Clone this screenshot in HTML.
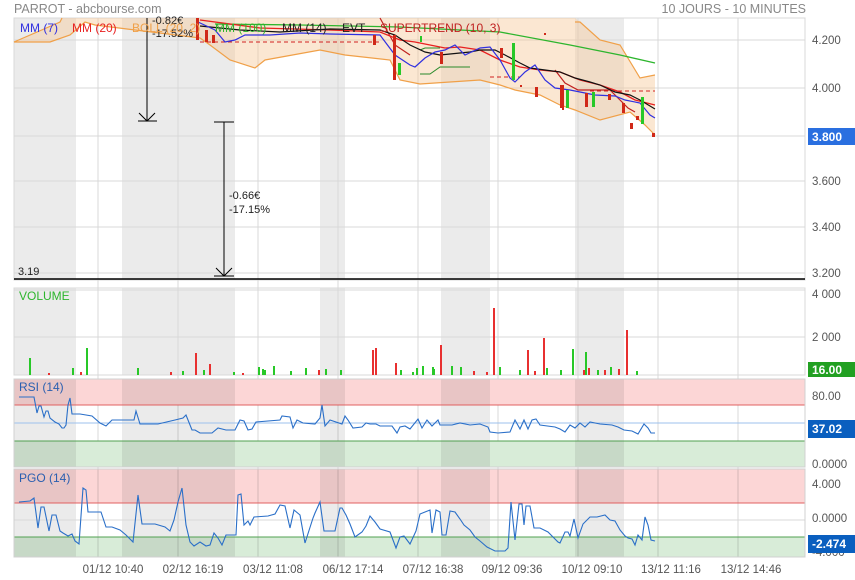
<!DOCTYPE html>
<html><head><meta charset="utf-8"><style>
html,body{margin:0;padding:0;background:#fff;width:855px;height:580px;overflow:hidden;font-family:"Liberation Sans",sans-serif}
svg text{font-family:"Liberation Sans",sans-serif}
</style></head><body>
<svg width="855" height="580" viewBox="0 0 855 580" xmlns="http://www.w3.org/2000/svg">
<text x="14" y="13" font-size="12.5" fill="#888">PARROT - abcbourse.com</text>
<text x="806" y="13" font-size="12.5" fill="#888" text-anchor="end">10 JOURS - 10 MINUTES</text>

<!-- grey bands -->
<g fill="#ebebeb">
<rect x="14" y="18" width="62" height="262"/><rect x="122" y="18" width="113" height="262"/><rect x="320" y="18" width="25" height="262"/><rect x="441" y="18" width="49" height="262"/><rect x="575" y="18" width="49" height="262"/>
<rect x="14" y="288" width="62" height="87"/><rect x="122" y="288" width="113" height="87"/><rect x="320" y="288" width="25" height="87"/><rect x="441" y="288" width="49" height="87"/><rect x="575" y="288" width="49" height="87"/>
</g>
<!-- grid -->
<g stroke="#d8d8d8" stroke-width="1">
<line x1="98" y1="18" x2="98" y2="557"/><line x1="178" y1="18" x2="178" y2="557"/><line x1="258" y1="18" x2="258" y2="557"/><line x1="338" y1="18" x2="338" y2="557"/><line x1="418" y1="18" x2="418" y2="557"/><line x1="498" y1="18" x2="498" y2="557"/><line x1="578" y1="18" x2="578" y2="557"/><line x1="658" y1="18" x2="658" y2="557"/><line x1="738" y1="18" x2="738" y2="557"/>
<line x1="14" y1="40" x2="805" y2="40"/><line x1="14" y1="88" x2="805" y2="88"/><line x1="14" y1="136" x2="805" y2="136"/><line x1="14" y1="181" x2="805" y2="181"/><line x1="14" y1="227" x2="805" y2="227"/><line x1="14" y1="273" x2="805" y2="273"/>
<line x1="14" y1="290" x2="805" y2="290"/><line x1="14" y1="337" x2="805" y2="337"/>
<rect x="14" y="18" width="791" height="262" fill="none"/>
<rect x="14" y="288" width="791" height="87" fill="none"/>
</g>
<!-- bollinger band -->
<path d="M14,42 L60,22 L62,18 L575,18 L580,22 L600,40 L620,45 L640,78 L655,75 L655,135 L645,125 L630,112 L600,120 L575,110 L560,105 L540,95 L515,90 L500,85 L480,80 L420,84 L400,80 L390,60 L345,55 L320,50 L265,60 L255,68 L230,60 L210,45 L200,38 L95,25 L85,22 L70,35 L50,42 Z" fill="#f7c99b" fill-opacity="0.45" stroke="none"/>
<path d="M14,42 L60,22 L62,18 M575,22 L580,22 L600,40 L620,45 L640,78 L655,75" fill="none" stroke="#f0a048" stroke-width="1.2"/>
<path d="M14,42 L50,42 L70,35 L85,22 L95,25 L200,38 L210,45 L230,60 L255,68 L265,60 L320,50 L345,55 L390,60 L400,80 L420,84 L480,80 L500,85 L515,90 L540,95 L560,105 L575,110 L600,120 L630,112 L645,125 L655,135" fill="none" stroke="#f0a048" stroke-width="1.2"/>
<!-- MM100 -->
<polyline points="215,24 300,25 400,27 500,32 570,45 620,55 655,63" fill="none" stroke="#2db52d" stroke-width="1.3"/>
<!-- supertrend -->
<polyline points="380,18 395,45 410,55" fill="none" stroke="#c02020" stroke-width="1.2"/>
<polyline points="555,70 565,83 578,90 610,90 620,100 628,108 635,112" fill="none" stroke="#c02020" stroke-width="1.2"/>
<line x1="200" y1="42" x2="380" y2="42" stroke="#d02020" stroke-dasharray="4,3"/>
<line x1="490" y1="77" x2="520" y2="77" stroke="#d02020" stroke-dasharray="4,3"/>
<line x1="590" y1="91" x2="655" y2="91" stroke="#d02020" stroke-dasharray="4,3"/>
<polyline points="420,74 430,74 440,67 470,67" fill="none" stroke="#2a8a2a" stroke-width="1"/>
<polyline points="420,50 425,48 440,48" fill="none" stroke="#2a8a2a" stroke-width="1"/>
<!-- MM20 red -->
<polyline points="200,20 260,28 330,30 380,32 400,40 415,42 430,45 445,48 460,47 480,50 500,60 520,67 540,70 560,72 580,80 600,85 620,92 635,100 655,105" fill="none" stroke="#e82020" stroke-width="1.3"/>
<!-- MM14 black -->
<polyline points="200,26 240,30 280,32 330,29 380,30 395,35 410,45 425,52 440,55 470,52 480,50 495,50 505,55 520,63 530,68 545,70 560,72 575,78 590,82 600,85 615,92 630,95 640,100 655,109" fill="none" stroke="#111" stroke-width="1.2"/>
<!-- MM7 blue -->
<polyline points="198,22 215,30 225,42 235,40 245,35 270,35 300,33 330,34 380,35 395,55 410,65 415,67 425,58 435,52 445,50 455,45 465,55 480,48 490,47 500,60 510,78 515,82 525,72 535,65 545,80 555,88 570,90 580,92 595,95 615,96 625,100 640,103 650,115 655,118" fill="none" stroke="#3030e0" stroke-width="1.2"/>
<!-- candles -->
<g fill="#d02818">
<rect x="196" y="18" width="3" height="22"/><rect x="205" y="30" width="3" height="12"/><rect x="212" y="35" width="3" height="8"/><rect x="373" y="35" width="3" height="10"/><rect x="393" y="35" width="3" height="45"/><rect x="440" y="52" width="3" height="12"/><rect x="500" y="48" width="3" height="10"/><rect x="535" y="87" width="3" height="10"/><rect x="560" y="85" width="3" height="23"/><rect x="562" y="85" width="2" height="25"/><rect x="585" y="93" width="3" height="14"/><rect x="608" y="94" width="3" height="6"/><rect x="630" y="123" width="3" height="6"/><rect x="622" y="103" width="3" height="10"/><rect x="636" y="116" width="3" height="4"/><rect x="652" y="133" width="3" height="4"/><rect x="544" y="33" width="2" height="2"/><rect x="520" y="85" width="2" height="2"/>
</g>
<g fill="#28c828">
<rect x="398" y="63" width="3" height="12"/><rect x="420" y="36" width="2" height="6"/><rect x="512" y="43" width="3" height="37"/><rect x="566" y="90" width="3" height="18"/><rect x="592" y="92" width="3" height="15"/><rect x="641" y="97" width="3" height="27"/>
</g>
<!-- annotations -->
<g stroke="#000" stroke-width="1" fill="none">
<line x1="147" y1="18" x2="147" y2="121"/><polyline points="139,113 147,121 155,113"/><line x1="138" y1="121" x2="157" y2="121"/>
<line x1="224" y1="122" x2="224" y2="276"/><line x1="214" y1="122" x2="234" y2="122"/><polyline points="216,268 224,276 232,268"/><line x1="214" y1="276" x2="234" y2="276"/>
</g>
<line x1="14" y1="279" x2="805" y2="279" stroke="#000" stroke-width="1.5"/>
<text x="18" y="275" font-size="11" fill="#222">3.19</text>
<text x="229" y="199" font-size="11" fill="#222">-0.66€</text>
<text x="229" y="213" font-size="11" fill="#222">-17.15%</text>
<text x="152" y="24" font-size="11" fill="#222">-0.82€</text>
<text x="152" y="37" font-size="11" fill="#222">-17.52%</text>
<!-- legend -->
<g font-size="12">
<text x="20" y="32" fill="#3030e0">MM (7)</text>
<text x="72" y="32" fill="#e82020">MM (20)</text>
<text x="132" y="32" fill="#f0a048">BOLL (20, 2)</text>
<text x="215" y="32" fill="#2db52d">MM (100)</text>
<text x="282" y="32" fill="#222">MM (14)</text>
<text x="342" y="32" fill="#222">EVT</text>
<text x="380" y="32" fill="#c02020">SUPERTREND (10, 3)</text>
</g>
<!-- price axis -->
<g font-size="11.5" fill="#555">
<text x="812" y="44">4.200</text><text x="812" y="92">4.000</text><text x="812" y="185">3.600</text><text x="812" y="231">3.400</text><text x="812" y="277">3.200</text>
<text x="812" y="298">4 000</text><text x="812" y="341">2 000</text>
</g>
<rect x="808" y="128" width="47" height="17" fill="#2a6fe0"/><text x="812" y="141" font-size="12" fill="#fff" font-weight="bold">3.800</text>
<rect x="808" y="362" width="47" height="15" fill="#22a022"/><text x="812" y="374" font-size="12" fill="#fff" font-weight="bold">16.00</text>
<!-- volume -->
<text x="19" y="300" font-size="12" fill="#2db52d">VOLUME</text>
<g fill="#28c828">
<rect x="29" y="358" width="2" height="17"/><rect x="86" y="348" width="2" height="27"/><rect x="72" y="368" width="2" height="7"/><rect x="137" y="368" width="2" height="7"/><rect x="258" y="367" width="2" height="8"/><rect x="264" y="370" width="2" height="5"/><rect x="273" y="366" width="2" height="9"/><rect x="305" y="368" width="2" height="7"/><rect x="340" y="370" width="2" height="5"/><rect x="262" y="369" width="2" height="6"/><rect x="400" y="370" width="2" height="5"/><rect x="412" y="372" width="2" height="3"/><rect x="460" y="367" width="2" height="8"/><rect x="416" y="368" width="2" height="7"/><rect x="433" y="369" width="2" height="6"/><rect x="422" y="366" width="2" height="9"/><rect x="432" y="367" width="2" height="8"/><rect x="451" y="366" width="2" height="9"/><rect x="499" y="367" width="2" height="8"/><rect x="572" y="349" width="2" height="26"/><rect x="585" y="352" width="2" height="23"/><rect x="546" y="368" width="2" height="7"/><rect x="560" y="370" width="2" height="5"/><rect x="610" y="367" width="2" height="8"/><rect x="636" y="371" width="2" height="4"/><rect x="519" y="370" width="2" height="5"/><rect x="182" y="371" width="2" height="4"/><rect x="203" y="370" width="2" height="5"/><rect x="233" y="372" width="2" height="3"/><rect x="290" y="371" width="2" height="4"/><rect x="325" y="369" width="2" height="6"/><rect x="597" y="370" width="2" height="5"/></g>
<g fill="#e83030">
<rect x="493" y="308" width="2" height="67"/><rect x="375" y="348" width="2" height="27"/><rect x="440" y="345" width="2" height="30"/><rect x="527" y="350" width="2" height="25"/><rect x="543" y="338" width="2" height="37"/><rect x="626" y="330" width="2" height="45"/><rect x="195" y="353" width="2" height="22"/><rect x="209" y="364" width="2" height="11"/><rect x="372" y="350" width="2" height="25"/><rect x="395" y="363" width="2" height="12"/><rect x="583" y="370" width="2" height="5"/><rect x="588" y="368" width="2" height="7"/><rect x="318" y="370" width="2" height="5"/><rect x="170" y="372" width="2" height="3"/><rect x="486" y="372" width="2" height="3"/><rect x="618" y="369" width="2" height="6"/><rect x="473" y="371" width="2" height="4"/><rect x="48" y="373" width="2" height="2"/><rect x="80" y="372" width="2" height="3"/><rect x="242" y="373" width="2" height="2"/><rect x="604" y="370" width="2" height="5"/><rect x="534" y="371" width="2" height="4"/></g>
<!-- RSI -->
<rect x="14" y="379" width="791" height="26" fill="#fcd6d6"/>
<rect x="14" y="441" width="791" height="26" fill="#d8ecd8"/>
<g fill="#000" fill-opacity="0.08"><rect x="14" y="379" width="62" height="88"/><rect x="122" y="379" width="113" height="88"/><rect x="320" y="379" width="25" height="88"/><rect x="441" y="379" width="49" height="88"/><rect x="575" y="379" width="49" height="88"/>
<rect x="14" y="469" width="62" height="88"/><rect x="122" y="469" width="113" height="88"/><rect x="320" y="469" width="25" height="88"/><rect x="441" y="469" width="49" height="88"/><rect x="575" y="469" width="49" height="88"/></g>
<line x1="14" y1="405" x2="805" y2="405" stroke="#e06060"/>
<line x1="14" y1="423" x2="805" y2="423" stroke="#9cc0ec"/>
<line x1="14" y1="441" x2="805" y2="441" stroke="#50a050"/>
<rect x="14" y="379" width="791" height="88" fill="none" stroke="#d0d0d0"/>
<text x="19" y="391" font-size="12" fill="#2a5fb0">RSI (14)</text>
<polyline points="19,397 34,397 37,413 39,406 41,406 44,417 46,411 48,411 50,418 55,422 59,424 62,428 64,428 66,425 68,405 70,398 72,414 80,414 92,416 100,423 106,426 112,420 134,420 136,411 140,424 158,424 175,420 183,418 186,415 192,430 195,430 200,433 212,433 218,428 226,430 235,430 240,420 244,421 248,430 252,429 256,422 280,420 282,416 290,417 293,428 297,420 303,423 315,424 320,418 322,405 325,426 330,420 342,424 345,416 348,420 353,428 362,427 366,423 370,424 376,424 380,426 392,426 397,433 400,427 405,426 410,429 418,419 422,428 427,420 432,426 438,420 440,425 452,425 460,423 470,425 480,424 488,427 490,432 498,433 510,432 515,420 520,429 524,420 528,429 532,420 536,419 540,425 555,427 560,429 565,432 570,425 575,428 580,423 585,427 590,422 600,424 612,425 618,427 624,430 632,431 638,434 644,424 648,428 651,433 655,433" fill="none" stroke="#2a6fc8" stroke-width="1.1"/>
<g font-size="11.5" fill="#555"><text x="812" y="400">80.00</text><text x="812" y="468">0.0000</text><text x="812" y="488">4.000</text><text x="812" y="522">0.0000</text><text x="812" y="556">-4.000</text></g>
<rect x="808" y="420" width="47" height="18" fill="#0a5fbf"/><text x="812" y="433" font-size="12" fill="#fff" font-weight="bold">37.02</text>
<!-- PGO -->
<rect x="14" y="469" width="791" height="34" fill="#fcd6d6" fill-opacity="1" style="mix-blend-mode:multiply"/>
<rect x="14" y="537" width="791" height="20" fill="#d8ecd8" style="mix-blend-mode:multiply"/>
<line x1="14" y1="503" x2="805" y2="503" stroke="#e06060"/>
<line x1="14" y1="520" x2="805" y2="520" stroke="#d8d8d8"/>
<line x1="14" y1="537" x2="805" y2="537" stroke="#50a050"/>
<rect x="14" y="469" width="791" height="88" fill="none" stroke="#d0d0d0"/>
<text x="19" y="482" font-size="12" fill="#2a5fb0">PGO (14)</text>
<polyline points="19,502 30,501 34,498 38,528 41,507 44,507 49,531 52,515 56,515 60,531 63,533 68,536 72,534 75,541 79,544 83,488 86,490 88,512 101,512 106,527 112,527 120,530 126,535 133,542 138,495 142,524 155,524 165,527 170,531 174,520 178,502 182,488 186,525 190,542 194,546 200,542 206,546 210,545 214,533 218,538 222,545 226,535 236,535 238,495 241,494 244,525 248,521 250,525 254,517 268,516 275,514 280,505 285,506 290,528 294,510 300,515 305,543 313,518 315,513 320,502 324,531 335,531 340,508 342,508 346,515 350,524 355,537 362,532 366,526 370,516 375,522 380,529 390,532 396,548 400,537 404,536 410,544 416,531 420,514 425,512 430,510 432,533 436,510 440,512 442,535 446,535 450,511 455,512 460,519 464,525 470,530 475,537 480,541 487,547 495,551 505,551 508,548 511,502 515,540 519,504 522,504 524,525 526,506 530,506 534,528 540,528 548,532 554,538 558,542 560,543 565,532 568,532 570,536 574,519 578,538 583,524 590,517 597,517 605,515 610,520 615,521 620,530 625,536 628,538 632,539 635,545 638,535 642,540 645,517 648,525 651,540 655,541" fill="none" stroke="#2a6fc8" stroke-width="1.1"/>
<rect x="808" y="535" width="47" height="18" fill="#0a5fbf"/><text x="812" y="548" font-size="12" fill="#fff" font-weight="bold">-2.474</text>
<!-- x axis -->
<g font-size="11.5" fill="#555" text-anchor="middle">
<text x="113" y="573">01/12 10:40</text><text x="193" y="573">02/12 16:19</text><text x="273" y="573">03/12 11:08</text><text x="353" y="573">06/12 17:14</text><text x="433" y="573">07/12 16:38</text><text x="512" y="573">09/12 09:36</text><text x="592" y="573">10/12 09:10</text><text x="671" y="573">13/12 11:16</text><text x="751" y="573">13/12 14:46</text>
</g>
</svg>
</body></html>
